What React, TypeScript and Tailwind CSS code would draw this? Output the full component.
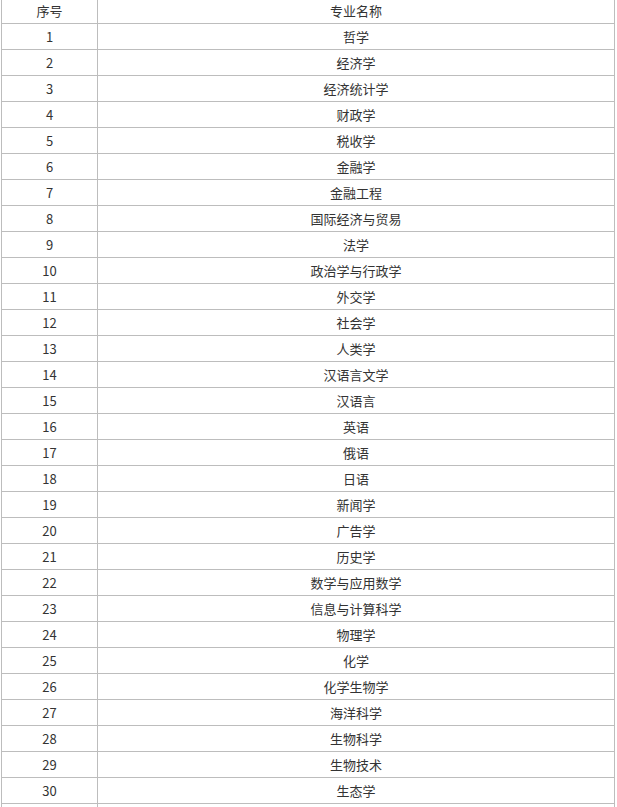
import React from "react";

const majors = [
  "哲学","经济学","经济统计学","财政学","税收学","金融学","金融工程","国际经济与贸易","法学","政治学与行政学",
  "外交学","社会学","人类学","汉语言文学","汉语言","英语","俄语","日语","新闻学","广告学",
  "历史学","数学与应用数学","信息与计算科学","物理学","化学","化学生物学","海洋科学","生物科学","生物技术","生态学",
];

export default function App() {
  return (
    <div className="w-[617px] h-[807px] overflow-hidden bg-white">
      <table
        className="ml-px -mt-[3px] w-[614px] border-collapse text-[13px] text-[#333] table-fixed"
        style={{ fontFamily: '"Microsoft YaHei", "Noto Sans CJK SC", sans-serif' }}
      >
        <colgroup>
          <col className="w-[96px]" />
          <col />
        </colgroup>
        <tbody>
          <tr className="h-[26px]">
            <td className="border border-[#bdbdbd] text-center p-0 leading-[25px]">序号</td>
            <td className="border border-[#bdbdbd] text-center p-0 leading-[25px]">专业名称</td>
          </tr>
          {majors.map((m, i) => (
            <tr key={i} className="h-[26px]">
              <td className="border border-[#bdbdbd] text-center p-0 leading-[25px]">{i + 1}</td>
              <td className="border border-[#bdbdbd] text-center p-0 leading-[25px]">{m}</td>
            </tr>
          ))}
          <tr className="h-[26px]">
            <td className="border border-[#bdbdbd] p-0"></td>
            <td className="border border-[#bdbdbd] p-0"></td>
          </tr>
        </tbody>
      </table>
    </div>
  );
}
